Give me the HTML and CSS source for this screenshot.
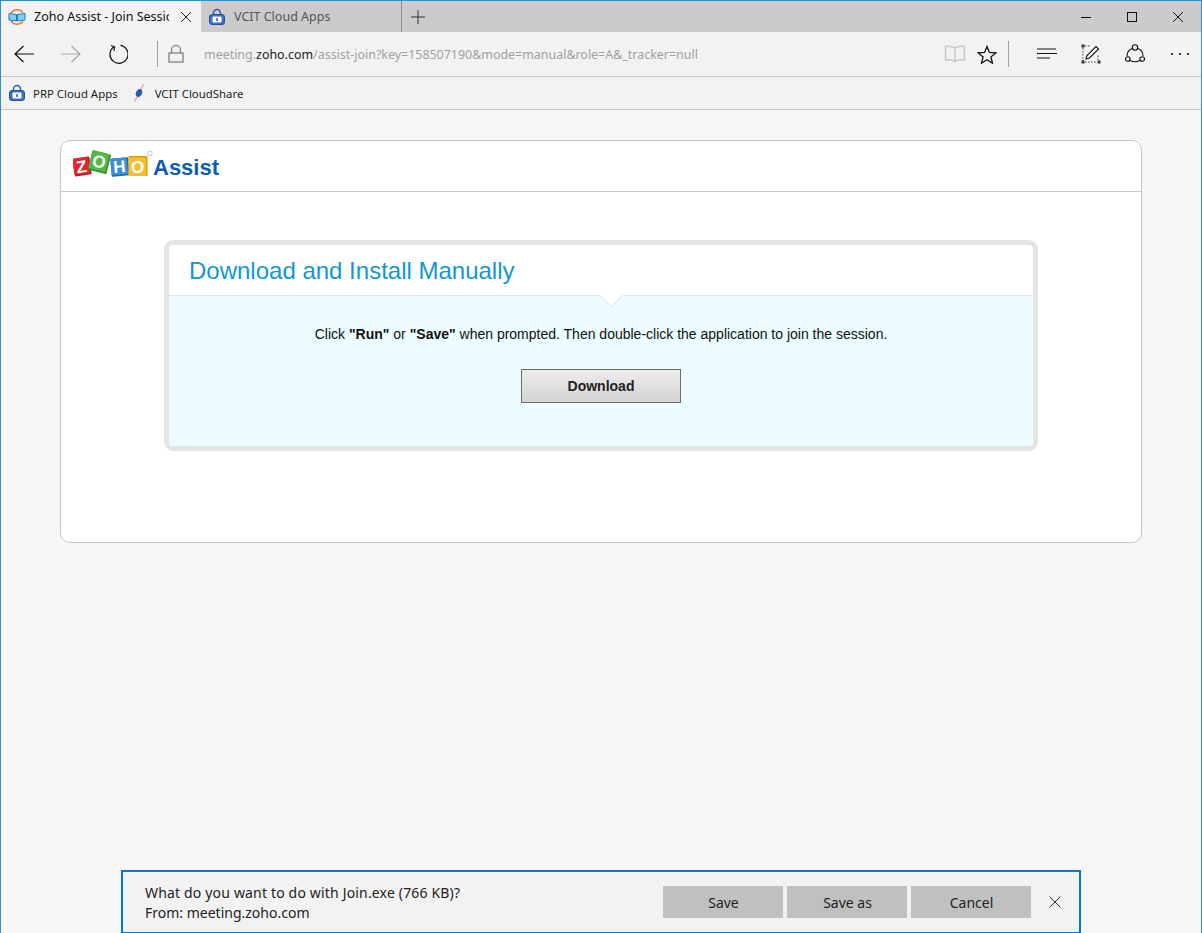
FILE: index.html
```html
<!DOCTYPE html>
<html lang="en">
<head>
<meta charset="utf-8">
<title>Zoho Assist - Join Session</title>
<link rel="stylesheet" href="styles.css">
</head>
<body>
<div class="window">
  <div class="tabbar">
    <div class="tab tab-active">
      <svg class="fav" viewBox="0 0 18 18" width="18" height="18">
        <path d="M3 5A7.500 7.500 0 0 1 15 4.500" fill="none" stroke="#ec7a3c" stroke-width="1.600"/>
        <path d="M15 13.500A7.500 7.500 0 0 1 3 13" fill="none" stroke="#ec7a3c" stroke-width="1.600"/>
        <path d="M1 5.500 8.500 6.500V13L1 12Z" fill="#7fd0f0" stroke="#1d7fb8"/>
        <path d="M17 5.500 9.500 6.500V13L17 12Z" fill="#7fd0f0" stroke="#1d7fb8"/>
      </svg>
      <span class="tab-title">Zoho Assist - Join Session</span>
      <svg class="tab-x" viewBox="0 0 12 12" width="12" height="12"><path d="M1 1 11 11M11 1 1 11" stroke="#222" fill="none"/></svg>
    </div>
    <div class="tab tab-other">
      <svg class="fav" viewBox="0 0 18 18" width="18" height="18">
        <path d="M5.500 7V5a3.500 3.500 0 0 1 7 0v2" fill="none" stroke="#2f5fb0" stroke-width="1.500"/>
        <rect x="1.500" y="6.500" width="15" height="10" rx="2.500" fill="#3d6fc4" stroke="#24509c"/>
        <rect x="4.500" y="8.500" width="9" height="6" rx="1" fill="#fff"/>
        <rect x="8.300" y="10" width="1.400" height="3" fill="#24509c"/>
      </svg>
      <span class="tab-title tab-title-dim">VCIT Cloud Apps</span>
    </div>
    <svg class="newtab" viewBox="0 0 14 14" width="14" height="14"><path d="M7 0V14M0 7H14" stroke="#333" fill="none"/></svg>
    <div class="winctrls">
      <svg viewBox="0 0 12 12" width="12" height="12"><path d="M1 6.500H11" stroke="#111" fill="none"/></svg>
      <svg viewBox="0 0 12 12" width="12" height="12"><rect x="1.500" y="1.500" width="9" height="9" fill="none" stroke="#111"/></svg>
      <svg viewBox="0 0 12 12" width="12" height="12"><path d="M1 1 11 11M11 1 1 11" stroke="#111" fill="none"/></svg>
    </div>
  </div>

  <div class="toolbar">
    <svg class="ic ic-back" viewBox="0 0 20 18" width="20" height="18"><path d="M20 9H1M9.500 1 1 9l8.500 8" fill="none" stroke="#111" stroke-width="1.200"/></svg>
    <svg class="ic ic-fwd" viewBox="0 0 20 18" width="20" height="18"><path d="M0 9H19M10.500 1 19 9l-8.500 8" fill="none" stroke="#a8a8a8" stroke-width="1.200"/></svg>
    <svg class="ic ic-refresh" viewBox="0 0 20 20" width="20" height="20"><path d="M6 2.800A9 9 0 1 0 12.500 1.400M3 1.500 6.600 2.800 5.800 6.800" fill="none" stroke="#111" stroke-width="1.200"/></svg>
    <span class="vsep vsep-a"></span>
    <svg class="ic ic-lock" viewBox="0 0 16 18" width="16" height="18"><path d="M3.500 8V5a4.500 4.500 0 0 1 9 0v3" fill="none" stroke="#777" stroke-width="1.200"/><rect x="1" y="8" width="14" height="9" fill="none" stroke="#777" stroke-width="1.200"/></svg>
    <div class="url">meeting.<b>zoho.com</b>/assist-join?key=158507190&amp;mode=manual&amp;role=A&amp;_tracker=null</div>
    <svg class="ic ic-book" viewBox="0 0 22 18" width="22" height="18"><path d="M11 3C9 1.500 5 1 1.500 1.500V15c3.500-.5 7.500 0 9.500 1.500 2-1.500 6-2 9.500-1.500V1.500C17 1 13 1.500 11 3ZM11 3V16.500" fill="none" stroke="#c8c8c8" stroke-width="1.500"/></svg>
    <svg class="ic ic-star" viewBox="0 0 20 19" width="20" height="19"><path d="M10 1.500 12.400 7.400 18.800 7.900 13.900 12 15.500 18.200 10 14.800 4.500 18.200 6.100 12 1.200 7.900 7.600 7.400Z" fill="none" stroke="#111" stroke-width="1.300"/></svg>
    <span class="vsep vsep-b"></span>
    <svg class="ic ic-hub" viewBox="0 0 20 12" width="20" height="12"><path d="M0 1H19M0 5.500H20M0 10H13" stroke="#111" stroke-width="1.200" fill="none"/></svg>
    <svg class="ic ic-note" viewBox="0 0 20 20" width="20" height="20"><path d="M2 4V17M4 18H16M17 16V10M4 2H10" stroke="#444" stroke-dasharray="1.500 1.500" fill="none"/><path d="M5 15 6 11.500 15 2.500 17.500 5 8.500 14Z" fill="#fff" stroke="#111" stroke-width="1.100"/><rect x="0.500" y="0.500" width="3" height="3" fill="#333"/><rect x="0.500" y="16.500" width="3" height="3" fill="#333"/><rect x="16.500" y="16.500" width="3" height="3" fill="#333"/></svg>
    <svg class="ic ic-share" viewBox="0 0 20 20" width="20" height="20"><path d="M7.200 4.500A8 8 0 0 0 2 12M12.800 4.500A8 8 0 0 1 18 12M5 16.500Q10 19 15 16.500" fill="none" stroke="#111" stroke-width="1.100"/><circle cx="10" cy="3.500" r="2.700" fill="none" stroke="#111" stroke-width="1.100"/><circle cx="2.800" cy="15" r="2.300" fill="none" stroke="#111" stroke-width="1.100"/><circle cx="17.200" cy="15" r="2.300" fill="none" stroke="#111" stroke-width="1.100"/></svg>
    <svg class="ic ic-more" viewBox="0 0 20 4" width="20" height="4"><circle cx="2" cy="2" r="1.100" fill="#111"/><circle cx="10" cy="2" r="1.100" fill="#111"/><circle cx="18" cy="2" r="1.100" fill="#111"/></svg>
  </div>

  <div class="favbar">
    <svg class="fav" viewBox="0 0 18 18" width="18" height="18">
      <path d="M5.500 7V5a3.500 3.500 0 0 1 7 0v2" fill="none" stroke="#2f5fb0" stroke-width="1.500"/>
      <rect x="1.500" y="6.500" width="15" height="10" rx="2.500" fill="#3d6fc4" stroke="#24509c"/>
      <rect x="4.500" y="8.500" width="9" height="6" rx="1" fill="#fff"/>
      <rect x="8.300" y="10" width="1.400" height="3" fill="#24509c"/>
    </svg>
    <span class="fav-label fav-label-a">PRP Cloud Apps</span>
    <svg class="fav fav-cs" viewBox="0 0 12 18" width="12" height="18">
      <path d="M1.500 17.500 10.500 0.500" stroke="#f0a090" stroke-width="1.300" fill="none"/>
      <ellipse cx="6" cy="9" rx="3" ry="4" transform="rotate(25 6 9)" fill="#1f5fa8"/>
    </svg>
    <span class="fav-label">VCIT CloudShare</span>
  </div>

  <main class="page">
    <section class="card">
      <header class="card-head">
        <div class="logo">
          <svg class="logo-mark" viewBox="0 0 80 28" width="80" height="28">
            <g font-family="'Liberation Sans', sans-serif" font-weight="700" font-size="17" text-anchor="middle" fill="#fff">
              <g transform="rotate(-8 9 16)"><rect x="0.500" y="7.500" width="17" height="18" rx="1" fill="#c2141c"/><rect x="0.500" y="7.500" width="15.500" height="16.500" rx="1" fill="#e4262e"/><text x="8.500" y="22.500">Z</text></g>
              <g transform="rotate(14 26 12)"><rect x="17" y="2" width="19" height="20" rx="1" fill="#2f8f2a"/><rect x="17" y="2" width="17.500" height="18.500" rx="1" fill="#54b848"/><text x="26" y="17.500">O</text></g>
              <g transform="rotate(-5 47 17)"><rect x="38" y="8" width="18" height="18" rx="1" fill="#1c64ad"/><rect x="38" y="8" width="16.500" height="16.500" rx="1" fill="#3a8fd8"/><text x="46.500" y="22.500">H</text></g>
              <rect x="55.500" y="6" width="19" height="20" rx="1" fill="#e09a10"/>
              <rect x="55.500" y="7.500" width="17.500" height="18.500" rx="1" fill="#f8bd2c"/>
              <text x="64.500" y="23">O</text>
            </g>
            <circle cx="77" cy="3.500" r="2.300" fill="none" stroke="#b8b8b8" stroke-width="0.800"/>
          </svg>
          <span class="logo-word">Assist</span>
        </div>
      </header>
      <div class="card-body">
        <div class="panel">
          <h1 class="panel-title">Download and Install Manually</h1>
          <div class="panel-body">
            <span class="notch"></span>
            <p class="panel-text">Click <b>"Run"</b> or <b>"Save"</b> when prompted. Then double-click the application to join the session.</p>
            <button class="dl-btn">Download</button>
          </div>
        </div>
      </div>
    </section>

    <aside class="dlbar">
      <div class="dl-msg">
        <div class="dl-q">What do you want to do with Join.exe (766 KB)?</div>
        <div>From: meeting.zoho.com</div>
      </div>
      <button class="bar-btn">Save</button>
      <button class="bar-btn">Save as</button>
      <button class="bar-btn">Cancel</button>
      <svg class="bar-x" viewBox="0 0 12 12" width="12" height="12"><path d="M0.500 0.500 11.500 11.500M11.500 0.500 0.500 11.500" stroke="#333" fill="none"/></svg>
    </aside>
  </main>
</div>
</body>
</html>
```

FILE: styles.css
```css
* { box-sizing: border-box; }
html, body { margin: 0; padding: 0; height: 100%; overflow: hidden; }
body { font-family: "Noto Sans", "Open Sans", sans-serif; color: #111; }
svg { display: block; flex: none; }

.window {
  height: 933px;
  display: flex;
  flex-direction: column;
  border: 1px solid #2b8fd8;
  border-bottom: 0;
  background: #f6f6f6;
}

.tabbar {
  height: 31px;
  display: flex;
  align-items: center;
  background: #cbcbcb;
  flex: none;
}
.tab {
  height: 31px;
  width: 200px;
  display: flex;
  align-items: center;
  padding-left: 7px;
  font-size: 12.5px;
}
.tab-active { background: #f2f2f2; }
.tab-other { width: 201px; border-right: 1px solid #8a8a8a; }
.tab-title {
  margin-left: 8px;
  width: 135px;
  white-space: nowrap;
  overflow: hidden;
}
.tab-title-dim { color: #555; width: 165px; }
.tab-x { margin-left: 11px; }
.newtab { margin-left: 9px; }
.winctrls {
  margin-left: auto;
  display: flex;
  align-items: center;
  gap: 34px;
  padding-right: 17px;
}

.toolbar {
  height: 45px;
  flex: none;
  display: flex;
  align-items: center;
  background: #f2f2f2;
  border-bottom: 1px solid #c8c8c8;
  padding-left: 13px;
}
.ic-fwd { margin-left: 27px; }
.ic-refresh { margin-left: 27px; }
.vsep { width: 1px; height: 26px; background: #a0a0a0; flex: none; }
.vsep-a { margin-left: 29px; }
.ic-lock { margin-left: 10px; }
.url {
  margin-left: 20px;
  font-size: 12.45px;
  color: #a0a0a0;
  white-space: nowrap;
  width: 740px;
}
.url b { font-weight: 400; color: #222; }
.ic-star { margin-left: 11px; }
.vsep-b { margin-left: 11px; }
.ic-hub { margin-left: 28px; }
.ic-note { margin-left: 24px; }
.ic-share { margin-left: 24px; }
.ic-more { margin-left: 25px; }

.favbar {
  height: 33px;
  flex: none;
  display: flex;
  align-items: center;
  background: #f2f2f2;
  border-bottom: 1px solid #c8c8c8;
  padding-left: 7px;
}
.fav-label { font-size: 11.4px; color: #222; margin-left: 7px; white-space: nowrap; }
.fav-label-a { margin-right: 15px; }
.fav-cs { margin-right: 3px; }

.page {
  flex: 1;
  display: flex;
  flex-direction: column;
  padding: 30px 59px 0;
  background: #f6f6f6;
}

.card {
  height: 403px;
  flex: none;
  background: #fff;
  border: 1px solid #c8c8c8;
  border-radius: 10px;
}
.card-head {
  height: 51px;
  border-bottom: 1px solid #c8c8c8;
  padding: 9px 0 0 12px;
}
.logo { display: flex; align-items: flex-start; }
.logo-word {
  margin-top: 4px;
  font: 700 22px/28px "Liberation Sans", Arial, sans-serif;
  color: #0f5cb4;
}
.card-body { padding: 48px 103px 0; font-family: "Liberation Sans", Arial, sans-serif; }

.panel {
  height: 211px;
  border: 5px solid #e4e4e4;
  border-radius: 9px;
  background: #fff;
  display: flex;
  flex-direction: column;
  overflow: hidden;
}
.panel-title {
  margin: 0;
  height: 50px;
  padding-left: 20px;
  font-size: 24px;
  line-height: 52px;
  font-weight: 400;
  color: #1297cf;
  flex: none;
}
.panel-body {
  flex: 1;
  position: relative;
  background: #ecfcff;
  border-top: 1px solid #dfe5e8;
  display: flex;
  flex-direction: column;
  align-items: center;
}
.notch {
  position: absolute;
  top: -9px;
  left: 434px;
  width: 17px;
  height: 17px;
  background: #fff;
  border-right: 1px solid #dfe5e8;
  border-bottom: 1px solid #dfe5e8;
  transform: rotate(45deg);
}
.panel-text {
  margin: 30px 0 0;
  font-size: 14px;
  line-height: 16px;
  color: #111;
}
.dl-btn {
  margin-top: 27px;
  width: 160px;
  height: 34px;
  padding: 0;
  border: 1px solid #6a6a6a;
  background: linear-gradient(#ececec, #d4d4d4);
  font: 700 14px "Liberation Sans", Arial, sans-serif;
  color: #222;
}

.dlbar {
  margin-top: auto;
  align-self: center;
  width: 960px;
  height: 63px;
  flex: none;
  display: flex;
  align-items: center;
  background: #f2f2f2;
  border: 2px solid #0078d7;
  border-bottom-width: 1px;
  padding-left: 22px;
  font-size: 14px;
}
.dl-msg { width: 518px; line-height: 20px; color: #222; white-space: nowrap; margin-top: 1px; }
.dl-q { letter-spacing: 0.17px; }
.bar-btn {
  width: 120px;
  height: 32px;
  margin-right: 4px;
  padding: 0 0 0 1px;
  border: 0;
  background: #c0c0c0;
  font: 400 14px "Noto Sans", "Open Sans", sans-serif;
  color: #222;
}
.bar-x { margin-left: 14px; }
```
